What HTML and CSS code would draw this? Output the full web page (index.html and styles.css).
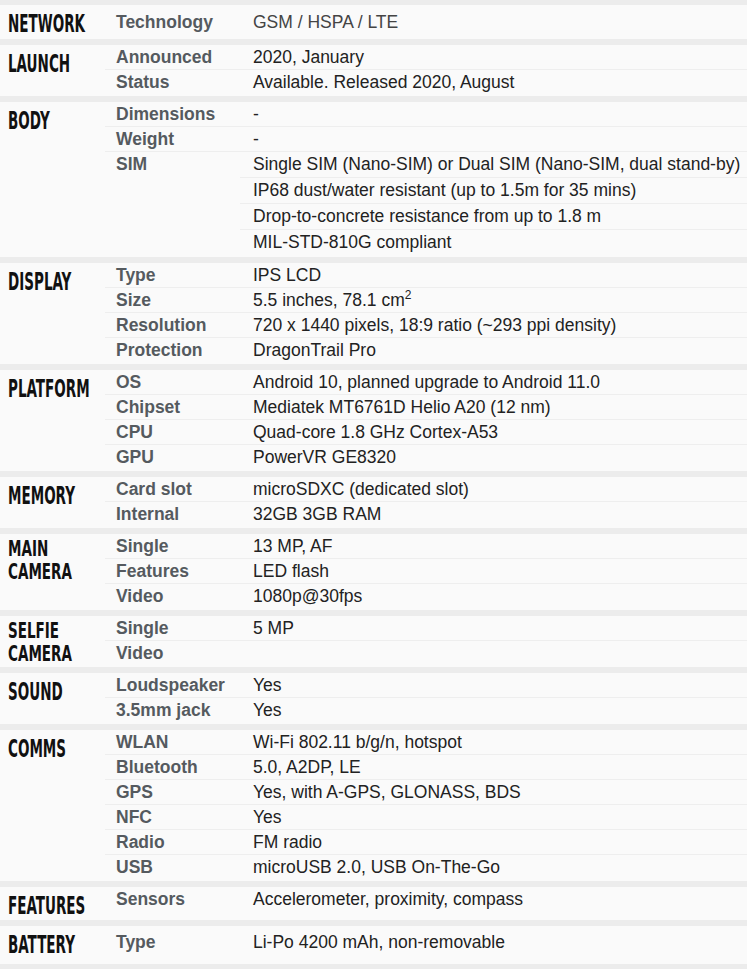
FILE: index.html
```html
<!DOCTYPE html>
<html lang="en">
<head>
<meta charset="utf-8">
<title>Specifications</title>
<link rel="stylesheet" href="styles.css">
</head>
<body>
<main class="specs">
  <section class="spec spec--network">
    <h2 class="cat"><span>Network</span></h2>
    <div class="rows">
      <div class="row"><div class="ttl">Technology</div><div class="vals"><div class="val val--link">GSM / HSPA / LTE</div></div></div>
    </div>
  </section>

  <section class="spec">
    <h2 class="cat"><span>Launch</span></h2>
    <div class="rows">
      <div class="row"><div class="ttl">Announced</div><div class="vals"><div class="val">2020, January</div></div></div>
      <div class="row"><div class="ttl">Status</div><div class="vals"><div class="val">Available. Released 2020, August</div></div></div>
    </div>
  </section>

  <section class="spec">
    <h2 class="cat"><span>Body</span></h2>
    <div class="rows">
      <div class="row"><div class="ttl">Dimensions</div><div class="vals"><div class="val">-</div></div></div>
      <div class="row"><div class="ttl">Weight</div><div class="vals"><div class="val">-</div></div></div>
      <div class="row"><div class="ttl">SIM</div><div class="vals vals--multi">
        <div class="val">Single SIM (Nano-SIM) or Dual SIM (Nano-SIM, dual stand-by)</div>
        <div class="val">IP68 dust/water resistant (up to 1.5m for 35 mins)</div>
        <div class="val">Drop-to-concrete resistance from up to 1.8 m</div>
        <div class="val">MIL-STD-810G compliant</div>
      </div></div>
    </div>
  </section>

  <section class="spec">
    <h2 class="cat"><span>Display</span></h2>
    <div class="rows">
      <div class="row"><div class="ttl">Type</div><div class="vals"><div class="val">IPS LCD</div></div></div>
      <div class="row"><div class="ttl">Size</div><div class="vals"><div class="val">5.5 inches, 78.1 cm<sup>2</sup></div></div></div>
      <div class="row"><div class="ttl">Resolution</div><div class="vals"><div class="val">720 x 1440 pixels, 18:9 ratio (~293 ppi density)</div></div></div>
      <div class="row"><div class="ttl">Protection</div><div class="vals"><div class="val">DragonTrail Pro</div></div></div>
    </div>
  </section>

  <section class="spec">
    <h2 class="cat"><span>Platform</span></h2>
    <div class="rows">
      <div class="row"><div class="ttl">OS</div><div class="vals"><div class="val">Android 10, planned upgrade to Android 11.0</div></div></div>
      <div class="row"><div class="ttl">Chipset</div><div class="vals"><div class="val">Mediatek MT6761D Helio A20 (12 nm)</div></div></div>
      <div class="row"><div class="ttl">CPU</div><div class="vals"><div class="val">Quad-core 1.8 GHz Cortex-A53</div></div></div>
      <div class="row"><div class="ttl">GPU</div><div class="vals"><div class="val">PowerVR GE8320</div></div></div>
    </div>
  </section>

  <section class="spec">
    <h2 class="cat"><span>Memory</span></h2>
    <div class="rows">
      <div class="row"><div class="ttl">Card slot</div><div class="vals"><div class="val">microSDXC (dedicated slot)</div></div></div>
      <div class="row"><div class="ttl">Internal</div><div class="vals"><div class="val">32GB 3GB RAM</div></div></div>
    </div>
  </section>

  <section class="spec">
    <h2 class="cat cat--double"><span>Main</span><span>Camera</span></h2>
    <div class="rows">
      <div class="row"><div class="ttl">Single</div><div class="vals"><div class="val">13 MP, AF</div></div></div>
      <div class="row"><div class="ttl">Features</div><div class="vals"><div class="val">LED flash</div></div></div>
      <div class="row"><div class="ttl">Video</div><div class="vals"><div class="val">1080p@30fps</div></div></div>
    </div>
  </section>

  <section class="spec">
    <h2 class="cat cat--double"><span>Selfie</span><span>Camera</span></h2>
    <div class="rows">
      <div class="row"><div class="ttl">Single</div><div class="vals"><div class="val">5 MP</div></div></div>
      <div class="row"><div class="ttl">Video</div><div class="vals"><div class="val">&nbsp;</div></div></div>
    </div>
  </section>

  <section class="spec">
    <h2 class="cat"><span>Sound</span></h2>
    <div class="rows">
      <div class="row"><div class="ttl">Loudspeaker</div><div class="vals"><div class="val">Yes</div></div></div>
      <div class="row"><div class="ttl">3.5mm jack</div><div class="vals"><div class="val">Yes</div></div></div>
    </div>
  </section>

  <section class="spec">
    <h2 class="cat"><span>Comms</span></h2>
    <div class="rows">
      <div class="row"><div class="ttl">WLAN</div><div class="vals"><div class="val">Wi-Fi 802.11 b/g/n, hotspot</div></div></div>
      <div class="row"><div class="ttl">Bluetooth</div><div class="vals"><div class="val">5.0, A2DP, LE</div></div></div>
      <div class="row"><div class="ttl">GPS</div><div class="vals"><div class="val">Yes, with A-GPS, GLONASS, BDS</div></div></div>
      <div class="row"><div class="ttl">NFC</div><div class="vals"><div class="val">Yes</div></div></div>
      <div class="row"><div class="ttl">Radio</div><div class="vals"><div class="val">FM radio</div></div></div>
      <div class="row"><div class="ttl">USB</div><div class="vals"><div class="val">microUSB 2.0, USB On-The-Go</div></div></div>
    </div>
  </section>

  <section class="spec">
    <h2 class="cat"><span>Features</span></h2>
    <div class="rows">
      <div class="row"><div class="ttl">Sensors</div><div class="vals"><div class="val">Accelerometer, proximity, compass</div></div></div>
    </div>
  </section>

  <section class="spec spec--battery">
    <h2 class="cat"><span>Battery</span></h2>
    <div class="rows">
      <div class="row"><div class="ttl">Type</div><div class="vals"><div class="val">Li-Po 4200 mAh, non-removable</div></div></div>
    </div>
  </section>
</main>
</body>
</html>
```
FILE: styles.css
```css
html, body {
  margin: 0;
  padding: 0;
}

body {
  background: #ececec;
  font-family: "Liberation Sans", Arial, sans-serif;
  color: #222;
}

.specs {
  display: flex;
  flex-direction: column;
  gap: 6px;
  padding-top: 5px;
  padding-bottom: 6px;
}

.spec {
  display: flex;
  background: #fafafa;
  padding-bottom: 1px;
}

.cat {
  flex: 0 0 105px;
  width: 105px;
  min-width: 0;
  box-sizing: border-box;
  margin: 0;
  padding: 5px 0 1px 8px;
  font-family: "DejaVu Sans", sans-serif;
  font-stretch: condensed;
  font-weight: bold;
  font-size: 25.5px;
  line-height: 26px;
  text-transform: uppercase;
  color: #111;
  overflow: visible;
  white-space: nowrap;
}

.cat span {
  display: block;
  width: 0;
  transform: scaleX(0.589);
  transform-origin: 0 0;
}

.cat--double {
  padding-top: 3px;
  font-size: 22px;
  line-height: 23px;
}

.cat--double span {
  transform: scaleX(0.683);
}

.rows {
  flex: 1 1 auto;
  min-width: 0;
  display: flex;
  flex-direction: column;
}

.row {
  display: flex;
  border-bottom: 1px solid #eeeeee;
}

.row:last-child {
  border-bottom-color: transparent;
}

.ttl {
  flex: 0 0 135px;
  box-sizing: border-box;
  padding-left: 11px;
  font-weight: bold;
  font-size: 17.5px;
  line-height: 24px;
  color: #555a5f;
}

.vals {
  flex: 1 1 auto;
  min-width: 0;
  display: flex;
  flex-direction: column;
}

.val {
  padding-left: 13px;
  font-size: 17.5px;
  line-height: 24px;
  color: #222;
  white-space: nowrap;
}

.val--link {
  color: #444;
}

.vals--multi .val {
  line-height: 25px;
}

.vals--multi .val + .val {
  border-top: 1px solid #eeeeee;
}

sup {
  font-size: 12px;
  line-height: 0;
  vertical-align: 7px;
}

.spec--network {
  min-height: 33px;
}

.spec--network .rows {
  padding-top: 5px;
}

.spec--battery {
  min-height: 37px;
}

.spec--battery .rows {
  padding-top: 4px;
}
```
